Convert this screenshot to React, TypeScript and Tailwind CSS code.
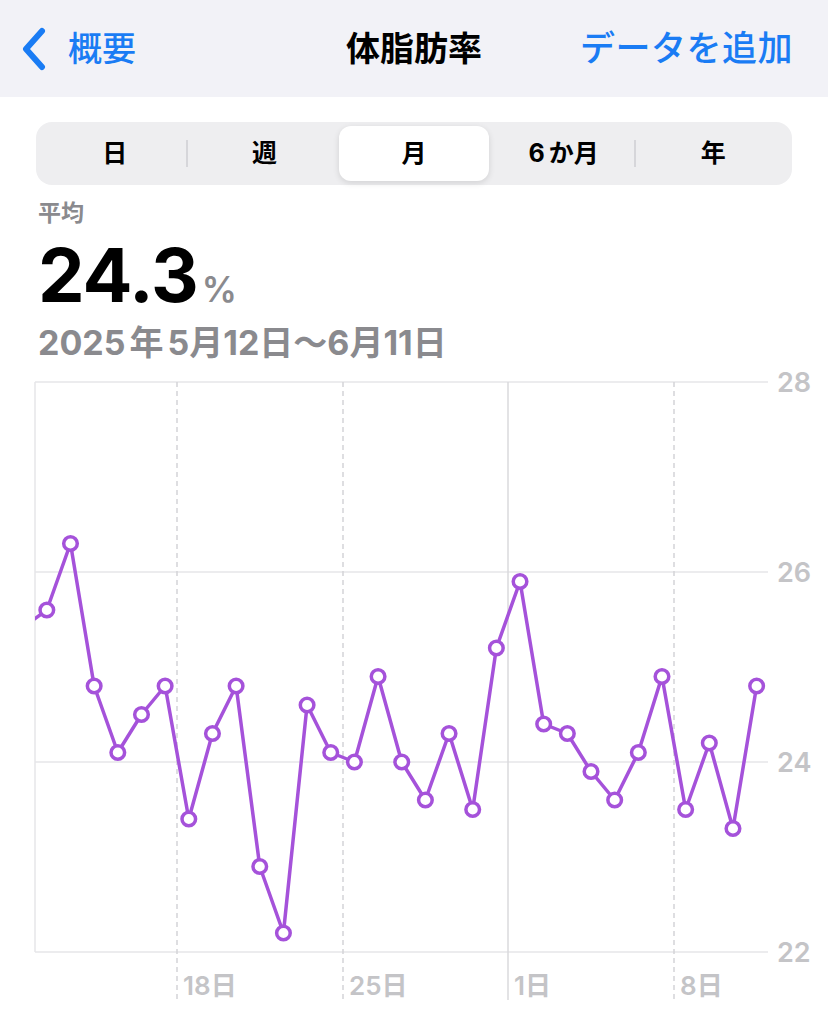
import React from 'react';

const values = [
  25.42, 25.6, 26.3, 24.8, 24.1, 24.5, 24.8, 23.4, 24.3, 24.8, 22.9, 22.2, 24.6, 24.1, 24.0, 24.9,
  24.0, 23.6, 24.3, 23.5, 25.2, 25.9, 24.4, 24.3, 23.9, 23.6, 24.1, 24.9, 23.5, 24.2, 23.3, 24.8,
];

const DAY = 23.66;
const px = (i: number) => 35 + (i - 0.5) * DAY;
const py = (v: number) => 952 - (v - 22) * 95;

const segments = ['日', '週', '月', '6か月', '年'];

const jp = { fontFamily: '"Inter", "Noto Sans CJK JP", sans-serif' };

function Chart() {
  const points = values.map((v, i) => `${px(i)},${py(v)}`).join(' ');
  const yTicks = [
    { label: '28', y: 382 },
    { label: '26', y: 572 },
    { label: '24', y: 762 },
    { label: '22', y: 952 },
  ];
  const xTicks = [
    { label: '18日', x: 177, dashed: true },
    { label: '25日', x: 343, dashed: true },
    { label: '1日', x: 508, dashed: false },
    { label: '8日', x: 674, dashed: true },
  ];
  return (
    <svg width={828} height={664} viewBox="0 360 828 664" className="block">
      <defs>
        <clipPath id="plot">
          <rect x={35} y={370} width={740} height={600} />
        </clipPath>
      </defs>
      {yTicks.map((t) => (
        <line key={t.label} x1={35} x2={768} y1={t.y} y2={t.y} stroke="#e6e6e9" strokeWidth={1.5} />
      ))}
      <line x1={35} x2={35} y1={382} y2={952} stroke="#e6e6e9" strokeWidth={1.5} />
      {xTicks.map((t) => (
        <line
          key={t.label}
          x1={t.x}
          x2={t.x}
          y1={382}
          y2={1000}
          stroke={t.dashed ? '#d4d4d8' : '#dadadd'}
          strokeWidth={1.5}
          strokeDasharray={t.dashed ? '5 4' : undefined}
        />
      ))}
      {yTicks.map((t) => (
        <text key={t.label} x={777} y={t.y + 10} fill="#c4c4c7" fontSize={27} fontWeight={600} style={jp}>
          {t.label}
        </text>
      ))}
      {xTicks.map((t) => (
        <text key={t.label} x={t.x + 6} y={995} fill="#c4c4c7" fontSize={26} fontWeight={600} style={jp}>
          {t.label}
        </text>
      ))}
      <g clipPath="url(#plot)">
        <polyline points={points} fill="none" stroke="#a552da" strokeWidth={3.5} strokeLinejoin="round" />
        {values.slice(1).map((v, i) => (
          <circle key={i} cx={px(i + 1)} cy={py(v)} r={6.8} fill="#fff" stroke="#a552da" strokeWidth={3.5} />
        ))}
      </g>
    </svg>
  );
}

export default function App() {
  return (
    <div className="w-[828px] h-[1024px] bg-white overflow-hidden" style={jp}>
      <header className="h-[97px] bg-[#f2f2f7] grid grid-cols-[1fr_auto_1fr] items-center">
        <div className="flex items-center pl-[20px] text-[#1a7cf4]">
          <svg width="30" height="44" viewBox="0 0 30 44" className="mr-[18px]">
            <path d="M22 4 L6 22 L22 40" fill="none" stroke="currentColor" strokeWidth="6" strokeLinecap="round" strokeLinejoin="round" />
          </svg>
          <span className="text-[34px] font-medium leading-none">概要</span>
        </div>
        <div className="text-[34px] font-bold leading-none text-black">体脂肪率</div>
        <div className="flex justify-end pr-[35px] text-[#1a7cf4] text-[35px] font-medium leading-none tracking-[0.5px]">
          データを追加
        </div>
      </header>

      <div className="pt-[25px] px-[36px]">
        <div className="h-[63px] rounded-[16px] bg-[#eeeef0] p-[4px] grid grid-cols-5 items-center">
          {segments.map((s, i) => {
            const selected = i === 2;
            const showSep = i === 1 || i === 4;
            return (
              <div key={s} className="relative h-full flex items-center justify-center">
                {showSep && <div className="absolute left-[-4px] top-[14px] bottom-[14px] w-[2px] bg-[#d6d6da]" />}
                <div
                  className={
                    selected
                      ? 'w-full h-full rounded-[12px] bg-white shadow-[0_2px_6px_rgba(0,0,0,0.12)] flex items-center justify-center'
                      : 'w-full h-full flex items-center justify-center'
                  }
                >
                  <span className="text-[25px] font-bold text-black leading-none">
                    {s === '6か月' ? (
                      <>
                        6<span className="ml-[4px]">か月</span>
                      </>
                    ) : (
                      s
                    )}
                  </span>
                </div>
              </div>
            );
          })}
        </div>
      </div>

      <div className="h-[175px] px-[38px] pt-[17px]">
        <div className="text-[23px] font-bold text-[#8a8a8e] leading-none">平均</div>
        <div className="mt-[13px] flex items-baseline leading-none">
          <span className="text-[74px] font-bold text-black tracking-[-1px]">24.3</span>
          <span className="ml-[4px] text-[35px] font-semibold text-[#8a8a8e]">%</span>
        </div>
        <div className="mt-[14px] text-[34px] font-bold text-[#8a8a8e] leading-none">
          2025<span className="mx-[4px]">年</span>5月12日〜6月11日
        </div>
      </div>

      <Chart />
    </div>
  );
}
